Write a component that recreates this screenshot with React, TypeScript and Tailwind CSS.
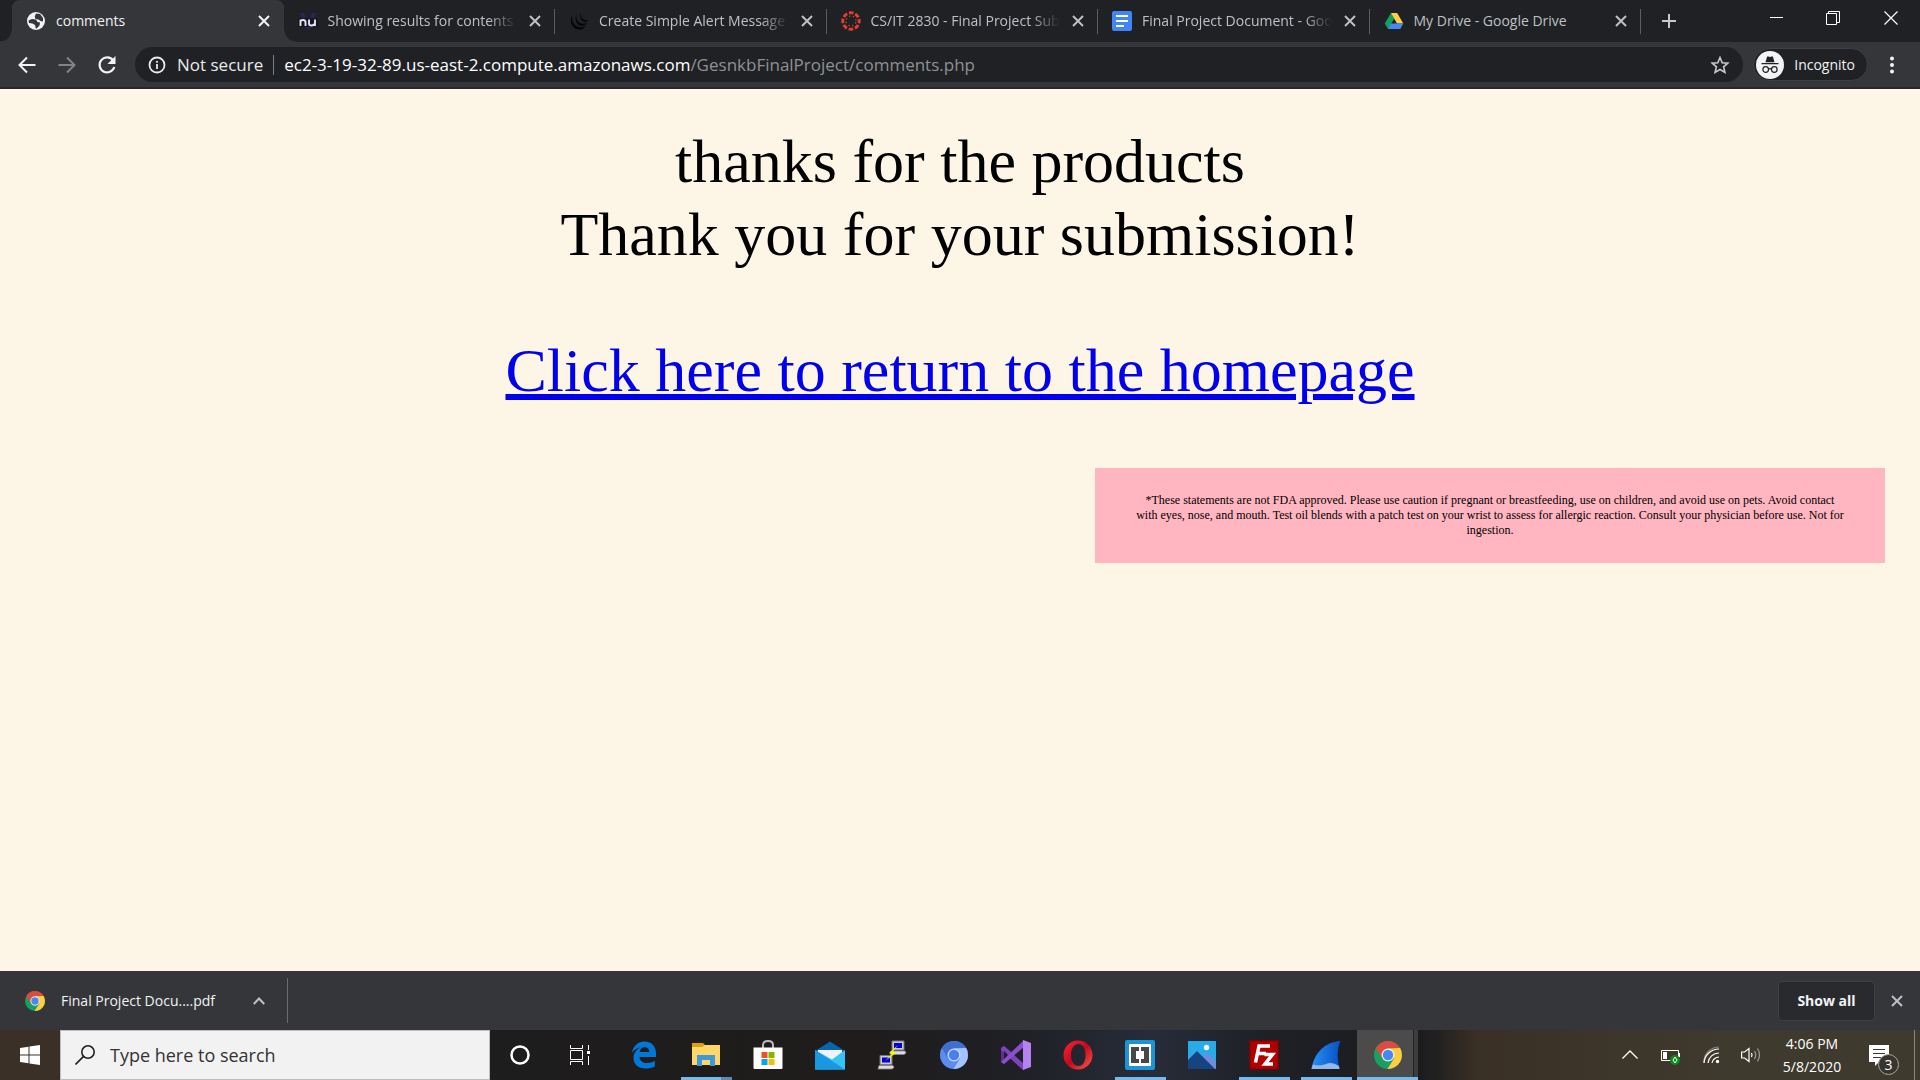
import React from "react";

type P = { className?: string };

const Globe = () => (
  <svg viewBox="0 0 20 20" className="h-5 w-5"><circle cx="10" cy="10" r="9" fill="#f1f3f4" /><path d="M2.500 9.500l3.500-1.500 4 .5 1.500 2.500 2.500.5-.5 3-3.500 3.500-1-4-2.500-1.500-3.500-.5zM10 2.500l4 .5 3 4v3.500l-2.500-.5-2-1.500-3-.5-.8-2.500z" fill="#35363a" /></svg>
);
const Nu = () => (
  <svg viewBox="0 0 20 20" className="h-5 w-5"><path d="M2 2h4l4 10 4-10h4l-5 14-3 3-3-3z" fill="#29235c" /><path d="M0 7h20v9H0z" fill="#111118" opacity=".7" /><path d="M2.500 15V8.500M2.500 10.500q.3-1.500 2.500-1.500t2.500 2v4M11 8.500v4q0 2 2.500 2t3.500-2V8.500v6.500" fill="none" stroke="#e4e4ea" strokeWidth="1.900" /></svg>
);
const JQuery = () => (
  <svg viewBox="0 0 20 20" className="h-5 w-5" fill="#050507"><path d="M3.500 4C0 9 2.500 18.500 10.500 18.500c3.500 0 5.500-1.800 6.500-4-2.500 2.300-7 2.500-10 .3C3.300 12 2.500 8.500 3.500 4z" /><path d="M7.500 3C5 8 8 14.800 13 14.800c2.500 0 4-1.300 5-3.300-2.500 1.800-5.500 1.800-8 0C7.500 9.500 6.800 6.500 7.500 3z" /><path d="M11.500 2c-1.500 4.500 1.500 8.800 4.500 8.800 1.500 0 2.500-.8 3-2.300-1.500 1-3.500.8-5-.5-2-1.500-2.500-3.500-2.500-6z" /></svg>
);
const Canvas = () => (
  <svg viewBox="0 0 20 20" className="h-5 w-5" stroke="#e13f2b" fill="#e13f2b"><circle cx="10" cy="10" r="8.200" fill="none" strokeWidth="3" strokeDasharray="4.600 1.840" strokeDashoffset="2.300" /><circle cx="10" cy="10" r="5" fill="none" strokeWidth="1.300" strokeDasharray="1.300 2.627" strokeDashoffset="-1.300" /></svg>
);
const Docs = () => (
  <svg viewBox="0 0 20 20" className="h-5 w-5"><rect width="20" height="20" rx="2" fill="#4285f4" /><path d="M4 5h12M4 10h12M4 15h8" stroke="#fff" strokeWidth="2" /></svg>
);
const Drive = () => (
  <svg viewBox="0 0 20 20" className="h-5 w-5"><path d="M7 2l3.300 5.500L4 18 .7 12.500z" fill="#11a15c" /><path d="M7 2h6.200l6.100 10.500h-6.300z" fill="#ffce43" /><path d="M6.700 12.500h12.600L16.300 18H4z" fill="#4688f4" /></svg>
);
const Close = ({ className = "h-3 w-3" }: P) => (
  <svg viewBox="0 0 12 12" className={className} stroke="currentColor" strokeWidth="2"><path d="M1 1l10 10M11 1L1 11" /></svg>
);
const Chrome = ({ className, blue = false }: P & { blue?: boolean }) => (
  <svg viewBox="0 0 28 28" className={className}>
    <circle cx="14" cy="14" r="14" fill={blue ? "#5b8def" : "#17a05e"} />
    <path d="M1.900 7A14 14 0 0 1 26.100 7H14L8 17.500z" fill={blue ? "#3f6fd0" : "#dd4b3e"} />
    <path d="M26.100 7A14 14 0 0 1 14 28l-.6-.1L20 17.500 14 7.500z" fill={blue ? "#a3c4fb" : "#ffcd40"} />
    <circle cx="14" cy="14" r="6.500" fill={blue ? "#c9dcff" : "#f1f1f1"} />
    <circle cx="14" cy="14" r="5.200" fill={blue ? "#4a80ea" : "#4687f4"} />
  </svg>
);

const tabs = [
  { title: "comments", icon: <Globe /> },
  { title: "Showing results for contents", icon: <Nu /> },
  { title: "Create Simple Alert Message U", icon: <JQuery /> },
  { title: "CS/IT 2830 - Final Project Subm", icon: <Canvas /> },
  { title: "Final Project Document - Goog", icon: <Docs /> },
  { title: "My Drive - Google Drive", icon: <Drive /> },
];

function TabStrip() {
  return (
    <header className="flex h-[42px] bg-[#202124]">
      <div className="grid flex-1 grid-cols-6 pl-3" role="tablist">
        {tabs.map((t, i) => (
          <div key={t.title} className={`relative flex min-w-0 items-center pl-[14px] pr-[14px] ${i === 0 ? "rounded-t-lg bg-[#35363a] text-[#f1f3f4]" : "text-[#bdc1c6]"}`}>
            {i === 0 && (
              <>
                <span className="absolute bottom-0 -left-3 h-3 w-3 bg-[radial-gradient(circle_at_0_0,#202124_11px,#35363a_12px)]" />
                <span className="absolute -right-3 bottom-0 h-3 w-3 bg-[radial-gradient(circle_at_100%_0,#202124_11px,#35363a_12px)]" />
              </>
            )}
            <button role="tab" aria-selected={i === 0} className="flex min-w-0 flex-1 items-center gap-[10px] text-left">
              <span className="shrink-0">{t.icon}</span>
              <span className={`flex-1 overflow-hidden text-sm whitespace-nowrap ${i > 0 && i < 5 ? "[mask-image:linear-gradient(to_right,black_85%,transparent)]" : ""}`}>{t.title}</span>
            </button>
            <button aria-label="Close tab" className="ml-3 shrink-0"><Close /></button>
            {i > 0 && <span className="absolute top-[9px] right-0 h-[25px] w-px bg-[#5b5d61]" />}
          </div>
        ))}
      </div>
      <button aria-label="New tab" className="flex w-14 items-center justify-center text-[#c6c9cd]">
        <svg viewBox="0 0 16 16" className="h-4 w-4" stroke="currentColor" strokeWidth="2"><path d="M8 1v14M1 8h14" /></svg>
      </button>
      <div className="ml-[52px] flex h-9 text-white">
        <button aria-label="Minimize" className="flex w-14 items-center justify-center"><svg viewBox="0 0 14 14" className="h-[14px] w-[14px]" stroke="currentColor"><path d="M0 6.500h13" /></svg></button>
        <button aria-label="Restore" className="flex w-14 items-center justify-center"><svg viewBox="0 0 14 14" className="h-[14px] w-[14px]" fill="none" stroke="currentColor"><path d="M.5 2.500h10v11H.5zM2.500 2.500v-2h11v11h-3" /></svg></button>
        <button aria-label="Close" className="flex w-[59px] items-center justify-center"><svg viewBox="0 0 14 14" className="h-[14px] w-[14px]" stroke="currentColor" strokeWidth="1.200"><path d="M.5.500l13 13M13.500.500l-13 13" /></svg></button>
      </div>
    </header>
  );
}

function Toolbar() {
  return (
    <nav className="flex h-[47px] items-center border-b-2 border-[#28292c] bg-[#35363a] pl-[17px] text-[#f1f3f4]">
      <button aria-label="Back" className="mr-5"><svg viewBox="0 0 20 20" className="h-5 w-5" fill="none" stroke="currentColor" strokeWidth="2"><path d="M18.500 10H3M10 2.500L2.500 10l7.500 7.500" /></svg></button>
      <button aria-label="Forward" className="mr-5 text-[#818387]"><svg viewBox="0 0 20 20" className="h-5 w-5" fill="none" stroke="currentColor" strokeWidth="2"><path d="M1.500 10H17M10 2.500l7.500 7.500-7.500 7.500" /></svg></button>
      <button aria-label="Reload" className="mr-[18px]"><svg viewBox="0 0 20 20" className="h-5 w-5" fill="none" stroke="currentColor" strokeWidth="2.200"><path d="M16.200 5.500A7.500 7.500 0 1 0 17.300 12" /><path d="M18.500 1v8h-8z" fill="currentColor" stroke="none" /></svg></button>
      <div className="flex h-[35px] flex-1 items-center rounded-full bg-[#202124] pr-[13px] pl-[13px]">
        <svg viewBox="0 0 18 18" className="mr-[11px] h-[18px] w-[18px]" fill="none" stroke="#e8eaed" strokeWidth="1.800"><circle cx="9" cy="9" r="7.500" /><path d="M9 8v5M9 5v1.800" /></svg>
        <span className="text-[17px] whitespace-nowrap text-[#e8eaed]">Not secure</span>
        <span className="mx-[10px] h-5 w-px bg-[#7b7d80]" />
        <button aria-label="Address" className="flex-1 text-left text-[17px] whitespace-nowrap text-white">ec2-3-19-32-89.us-east-2.compute.amazonaws.com<span className="text-[#8e9195]">/GesnkbFinalProject/comments.php</span></button>
        <button aria-label="Bookmark"><svg viewBox="0 0 20 20" className="h-5 w-5" fill="none" stroke="#c8cacd" strokeWidth="1.600"><path d="M10 2.500l2.200 5.200 5.600.5-4.200 3.700 1.300 5.500L10 14.500l-4.900 2.900 1.300-5.500L2.200 8.200l5.600-.5z" /></svg></button>
      </div>
      <button className="mr-[14px] ml-[10px] flex h-[33px] items-center gap-[10px] rounded-full border border-[#3f4044] bg-[#202124] pr-3 pl-[2px] text-sm">
        <svg viewBox="0 0 28 28" className="h-7 w-7"><circle cx="14" cy="14" r="14" fill="#f1f3f4" /><path d="M9.500 11.200l1.600-5.700h1.400l1.500.6 1.500-.6h1.400l1.600 5.700z" fill="#202124" /><path d="M5.500 12.700h17M12.200 18.200q1.800-1.200 3.600 0" stroke="#202124" strokeWidth="1.300" fill="none" /><circle cx="9.700" cy="18.500" r="2.800" fill="none" stroke="#202124" strokeWidth="1.200" /><circle cx="18.300" cy="18.500" r="2.800" fill="none" stroke="#202124" strokeWidth="1.200" /></svg>
        Incognito
      </button>
      <button aria-label="Menu" className="mr-[18px]"><svg viewBox="0 0 20 20" className="h-5 w-5" fill="currentColor"><circle cx="10" cy="3.500" r="2" /><circle cx="10" cy="10" r="2" /><circle cx="10" cy="16.500" r="2" /></svg></button>
    </nav>
  );
}

function PageContent() {
  return (
    <main className="flex-1 bg-[#fdf5e6] pt-9 text-center font-['Liberation_Serif',serif] text-black">
      <p className="text-[62px] leading-[73px]">thanks for the products<br />Thank you for your submission!</p>
      <p className="mt-[63px] text-[62px] leading-[73px]"><a href="#home" className="text-[#0000ee] underline decoration-[6px] [text-decoration-skip-ink:auto]">Click here to return to the homepage</a></p>
      <aside className="mt-[61px] mr-[35px] ml-auto w-[790px] bg-[#ffb6c1] pt-[25px] pb-[25px] text-[12px] leading-[15px]">
        *These statements are not FDA approved. Please use caution if pregnant or breastfeeding, use on children, and avoid use on pets. Avoid contact
        <br />
        with eyes, nose, and mouth. Test oil blends with a patch test on your wrist to assess for allergic reaction. Consult your physician before use. Not for
        <br />
        ingestion.
      </aside>
    </main>
  );
}

function Downloads() {
  return (
    <section className="flex h-[59px] items-center bg-[#35363a] text-[#f1f3f4]">
      <div className="my-2 flex h-[45px] w-[288px] items-center border-r border-[#6b6c70] pl-[25px]">
        <Chrome className="h-5 w-5" />
        <button className="ml-4 flex-1 text-left text-sm">Final Project Docu....pdf</button>
        <button aria-label="Download options" className="mr-[22px] text-[#bdc1c6]"><svg viewBox="0 0 12 12" className="h-3 w-3" fill="none" stroke="currentColor" strokeWidth="2"><path d="M.8 9L6 3.500 11.200 9" /></svg></button>
      </div>
      <button className="mr-4 ml-auto h-10 w-[97px] rounded border border-[#3f4044] bg-[#292a2d] text-sm font-bold">Show all</button>
      <button aria-label="Close downloads" className="mr-[17px] text-[#bdc1c6]"><Close /></button>
    </section>
  );
}

const Edge = () => <svg viewBox="0 0 30 30" className="h-[30px] w-[30px]"><path d="M3 13C4 6 9 1.500 15.500 1.500 23 1.500 27 7 27 13v4H10.500c.3 4 3.500 6 7.500 6 3 0 5.500-.8 7.800-2.200v5.700C23 28 20 28.500 16.500 28.500 9 28.500 4.500 24 4.500 18c0-5 3-8.500 7-10.500C7.500 7.800 4.800 10 3 13zM10.700 12h9.500c0-3-1.500-4.700-4.500-4.700S11 9 10.700 12z" fill="#0078d7" /></svg>;
const Folder = () => <svg viewBox="0 0 30 30" className="h-[30px] w-[30px]"><path d="M1 3h11l2 2h14v8H1z" fill="#e0a100" /><path d="M1 7h10l3-2h15v20H1z" fill="#ffd768" /><path d="M6 26V15h18v11h-5v-6h-8v6z" fill="#3f97dc" /></svg>;
const Store = () => <svg viewBox="0 0 30 30" className="h-[30px] w-[30px]"><path d="M10 8V5q0-4 5-4t5 4v3" fill="none" stroke="#bbb" strokeWidth="2" /><path d="M.5 7.500h29V28a1 1 0 0 1-1 1h-27a1 1 0 0 1-1-1z" fill="#fff" /><path d="M8.500 12h6v6h-6z" fill="#f25022" /><path d="M15.500 12h6v6h-6z" fill="#7fba00" /><path d="M8.500 19h6v6h-6z" fill="#00a4ef" /><path d="M15.500 19h6v6h-6z" fill="#ffb900" /></svg>;
const Mail = () => <svg viewBox="0 0 30 30" className="h-[30px] w-[30px]"><path d="M0 11l15-9.500L30 11v6H0z" fill="#0764b0" /><path d="M3 10h24v10H3z" fill="#f0f2f5" /><path d="M0 10l17 9.500L30 10v19.500H0z" fill="#35c3f5" /><path d="M0 10l30 19.500H0z" fill="#1a97e2" /></svg>;
const Putty = () => <svg viewBox="0 0 30 30" className="h-[30px] w-[30px]"><path d="M15 1h12v9H15z" fill="#c9c9c9" stroke="#777" /><path d="M17 3h8v5h-8z" fill="#0000e0" /><path d="M14 11h14l1 2-2 1.500H13z" fill="#ddd" stroke="#888" strokeWidth=".8" /><path d="M3 15.500h12v9H3z" fill="#c9c9c9" stroke="#777" /><path d="M5 17.500h8v5H5z" fill="#0000e0" /><path d="M2 25.500h14l1 2-2 1.500H1z" fill="#ddd" stroke="#888" strokeWidth=".8" /><path d="M21 5l-9 8 3 1-7 7 11-8-3-1.500z" fill="#f6f600" /></svg>;
const VS = () => <svg viewBox="0 0 30 30" className="h-[30px] w-[30px]"><path d="M0 8l3-2 11 9-11 9-3-2z" fill="#5d2f91" /><path d="M0 8l3-2 19 17v7L0 10z" fill="#7e42bd" /><path d="M0 22l3 2L23 7V0z" fill="#8a4fcb" /><path d="M22 0l8 3v24l-8 3z" fill="#b583f1" /><path d="M3 11v8l4-4zM22 9v12l-7-6z" fill="#202126" /></svg>;
const Opera = () => <svg viewBox="0 0 30 30" className="h-[30px] w-[30px]"><defs><linearGradient id="og" x2="1" y2="1"><stop stopColor="#ff2338" /><stop offset=".5" stopColor="#c5091c" /><stop offset="1" stopColor="#ff5b50" /></linearGradient></defs><path fillRule="evenodd" d="M15 .5a14.500 14.500 0 1 0 0 29 14.500 14.500 0 0 0 0-29zM15.500 4c4.800 0 7 5 7 11s-2.200 11-7 11S8 21 8 15s2.700-11 7.500-11z" fill="url(#og)" /></svg>;
const Brackets = () => <svg viewBox="0 0 30 30" className="h-[30px] w-[30px]"><rect width="30" height="30" rx="2" fill="#1b95d5" /><rect x="4" y="4" width="22" height="22" rx="1" fill="#fff" /><path d="M6 7h8v4h-3v8h3v4H6zM24 7h-8v4h3v8h-3v4h8z" fill="#484848" /></svg>;
const Photos = () => <svg viewBox="0 0 30 30" className="h-[30px] w-[30px]"><path d="M1 1h28v28H1z" fill="#29abe9" /><path d="M13 20l7-7 9 9v7H13z" fill="#748bdd" /><path d="M1 20l9-9 18 18H1z" fill="#164483" /><circle cx="19.500" cy="7.500" r="2.700" fill="#f2f6fa" /></svg>;
const FileZilla = () => <svg viewBox="0 0 30 30" className="h-[30px] w-[30px]"><rect x="1" y="1" width="28" height="28" fill="#b00000" stroke="#8e0000" strokeWidth="2" strokeDasharray="2 1" /><path d="M6.500 22.500L10 6h11M8 13.500h9M15.500 14.500h8L16 24h8" fill="none" stroke="#fff" strokeWidth="3.500" /></svg>;
const Shark = () => <svg viewBox="0 0 30 30" className="h-[30px] w-[30px]"><defs><linearGradient id="sg" x2="1"><stop stopColor="#2792f5" /><stop offset="1" stopColor="#0750c4" /></linearGradient></defs><path d="M.5 29C3 14 13 2 29.500 1c-3 7-4 15-1 28z" fill="url(#sg)" /><path d="M.5 29l1.500-4.500q7 2 13-.5t13 2l.5 3z" fill="#94b9e8" /></svg>;

const apps: { name: string; icon: React.ReactNode; open?: boolean; stacked?: boolean }[] = [
  { name: "Edge", icon: <Edge /> },
  { name: "File Explorer", icon: <Folder />, open: true, stacked: true },
  { name: "Store", icon: <Store /> },
  { name: "Mail", icon: <Mail /> },
  { name: "PuTTY", icon: <Putty /> },
  { name: "Chromium", icon: <Chrome blue className="h-7 w-7" /> },
  { name: "Visual Studio", icon: <VS /> },
  { name: "Opera", icon: <Opera /> },
  { name: "Brackets", icon: <Brackets />, open: true },
  { name: "Photos", icon: <Photos /> },
  { name: "FileZilla", icon: <FileZilla />, open: true },
  { name: "Wireshark", icon: <Shark />, open: true },
];

function Taskbar() {
  return (
    <footer className="flex h-[50px] bg-[linear-gradient(to_right,#3b3028_0,#3b3028_3%,#1e1d1d_26%,#1f1c1b_45%,#1f2025_53%,#272c39_60%,#1e2026_66%,#1c1c1f_74%,#242220_75%,#3a3025_77%,#3f3a2e_90%,#3f3a2e_100%)] text-white">
      <button aria-label="Start" className="flex w-[60px] items-center justify-center"><svg viewBox="0 0 20 20" className="h-5 w-5" fill="#fff"><path d="M0 3l8.500-1.200v7.700H0zM9.500 1.600L20 0v9.500H9.500zM0 10.500h8.500v7.700L0 17zM9.500 10.500H20V20L9.500 18.400z" /></svg></button>
      <label className="flex w-[430px] items-center border border-[#bdbdbd] bg-[#f2f2f2] pl-[14px]">
        <svg viewBox="0 0 20 20" className="h-5 w-5" fill="none" stroke="#222" strokeWidth="1.600"><circle cx="13" cy="7" r="6.200" /><path d="M8.600 11.400L.5 19.500" /></svg>
        <input type="search" aria-label="Search" placeholder="Type here to search" className="ml-[15px] flex-1 bg-transparent text-lg outline-none placeholder:text-[#333]" />
      </label>
      <button aria-label="Cortana" className="flex w-[60px] items-center justify-center"><svg viewBox="0 0 20 20" className="h-5 w-5" fill="none" stroke="#fff" strokeWidth="2.500"><circle cx="10" cy="10" r="8.500" /></svg></button>
      <button aria-label="Task view" className="mr-[3px] flex w-[60px] items-center justify-center"><svg viewBox="0 0 20 20" className="h-5 w-5" fill="none" stroke="#fff"><path d="M.5 0v3.500h12V0M.5 20v-3.500h12V20M.5 5.500h12v9H.5zM18.500 0v5M18.500 11v9" /><path d="M17 6h3v3h-3z" fill="#fff" stroke="none" /></svg></button>
      {apps.map((a) => (
        <button key={a.name} aria-label={a.name} className="flex w-[62px] flex-col items-center">
          <span className="flex h-[47px] items-center justify-center pt-[3px]">{a.icon}</span>
          {a.open && <span className={`h-[3px] w-[51px] ${a.stacked ? "bg-[linear-gradient(to_right,#76b9ed_40px,#5c8ab0_40px)]" : "bg-[#76b9ed]"}`} />}
        </button>
      ))}
      <button aria-label="Chrome" className="flex w-[61px] border-b-[3px] border-[#76b9ed] bg-[#4b4b4b] pt-[3px]">
        <span className="flex h-11 w-14 items-center justify-center pl-[5px]"><Chrome className="h-7 w-7" /></span>
        <span className="-mt-[3px] h-[47px] flex-1 border-l border-[#222] bg-[#3d3d3d]" />
      </button>
      <div className="ml-auto flex items-center">
        <button aria-label="Hidden icons" className="mr-[22px]"><svg viewBox="0 0 18 18" className="h-[18px] w-[18px]" fill="none" stroke="#fff" strokeWidth="1.300"><path d="M1.500 12.500L9 5l7.500 7.500" /></svg></button>
        <svg viewBox="0 0 20 20" className="mr-[22px] h-5 w-5"><path d="M.5 5.500h17v10H.5zM18.500 8v4" fill="none" stroke="#fff" /><path d="M2 7h4v7H2z" fill="#fff" /><circle cx="14" cy="15" r="5" fill="#0c8a1c" /><path d="M14 12l2 3-2 3-2-3z" fill="none" stroke="#fff" /></svg>
        <svg viewBox="0 0 18 18" className="mr-5 h-[18px] w-[18px]" fill="none" stroke="#fff" strokeWidth="1.200"><path d="M1 17A15 15 0 0 1 16 3M5 17A11 11 0 0 1 16 7M9 17a7 7 0 0 1 7-6" /><path d="M1 17V14A15 15 0 0 1 16 1" opacity=".4" /><circle cx="14.500" cy="15.500" r="1.700" fill="#fff" stroke="none" /></svg>
        <svg viewBox="0 0 20 20" className="mr-5 h-5 w-5" fill="none" stroke="#fff" strokeWidth="1.200"><path d="M.6 7h3L8 3.500v13L3.600 13h-3zM10.500 8q1 2 0 4" /><path d="M13.500 6q2.500 4 0 8M16.500 3.500q4 6.500 0 13" opacity=".5" /></svg>
        <time className="w-[62px] text-center text-sm leading-[23px] whitespace-nowrap">4:06 PM<br />5/8/2020</time>
        <button aria-label="Notifications" className="relative mr-[25px] ml-[26px] h-[22px] w-5"><svg viewBox="0 0 20 22" className="h-[22px] w-5"><path d="M0 1h20v17H10l-4 4v-4H0z" fill="#fff" /><path d="M4 5.500h12M4 9.500h12M4 13.500h8" stroke="#3f3a2e" /></svg><span className="absolute top-[10px] left-[9px] h-[21px] w-[21px] rounded-full border border-[#a9a79f] bg-[#37352f] text-[14px] leading-[19px]">3</span></button>
        <span className="mr-[5px] h-[50px] w-px bg-[#8c887c]" />
      </div>
    </footer>
  );
}

export default function App() {
  return (
    <div className="flex min-h-screen flex-col font-['Open_Sans',sans-serif]">
      <TabStrip />
      <Toolbar />
      <PageContent />
      <Downloads />
      <Taskbar />
    </div>
  );
}
